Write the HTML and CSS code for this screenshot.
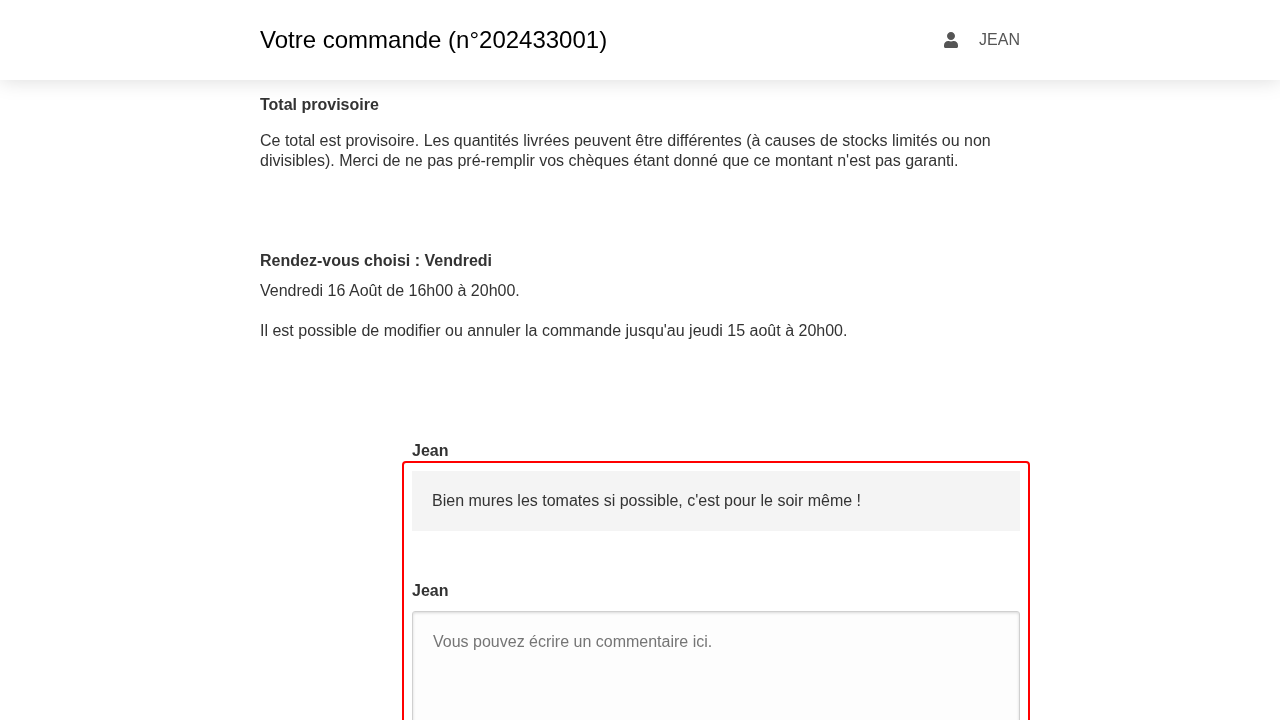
FILE: index.html
```html
<!DOCTYPE html>
<html lang="fr">
<head>
<meta charset="utf-8">
<title>Votre commande</title>
<link rel="stylesheet" href="styles.css">
</head>
<body>
<div class="page">
<header class="topbar">
  <div class="topbar-inner">
    <h1 class="title">Votre commande (n°202433001)</h1>
    <div class="user">
      <svg class="user-icon" viewBox="0 0 448 512" aria-hidden="true"><path d="M224 256c70.7 0 128-57.3 128-128S294.7 0 224 0 96 57.3 96 128s57.3 128 128 128zm89.6 32h-16.7c-22.2 10.2-46.9 16-72.9 16s-50.6-5.8-72.9-16h-16.7C60.2 288 0 348.2 0 422.4V464c0 26.5 21.5 48 48 48h352c26.5 0 48-21.5 48-48v-41.6c0-74.2-60.2-134.4-134.4-134.4z"/></svg>
      <span>JEAN</span>
    </div>
  </div>
</header>
<main class="content">
  <section class="total">
    <h2 class="heading">Total provisoire</h2>
    <p class="note">Ce total est provisoire. Les quantités livrées peuvent être différentes (à causes de stocks limités ou non divisibles). Merci de ne pas pré-remplir vos chèques étant donné que ce montant n'est pas garanti.</p>
  </section>
  <section class="meeting">
    <h2 class="heading">Rendez-vous choisi : Vendredi</h2>
    <p class="slot">Vendredi 16 Août de 16h00 à 20h00.</p>
    <p class="deadline">Il est possible de modifier ou annuler la commande jusqu'au jeudi 15 août à 20h00.</p>
  </section>
  <section class="comments">
    <div class="author">Jean</div>
    <div class="comment-box">
      <div class="bubble">Bien mures les tomates si possible, c'est pour le soir même !</div>
      <div class="author author-form">Jean</div>
      <textarea class="field" placeholder="Vous pouvez écrire un commentaire ici."></textarea>
    </div>
  </section>
</main>
</div>
</body>
</html>
```
FILE: styles.css
```css
* {
  box-sizing: border-box;
}

html,
body {
  height: 100%;
  overflow: hidden;
}

body {
  margin: 0;
  background: #fff;
  color: #333;
  font-family: "Liberation Sans", Arial, sans-serif;
  font-size: 16px;
  line-height: 20px;
}

.page {
  will-change: transform;
}

.topbar {
  position: relative;
  z-index: 1;
  height: 80px;
  background: #fff;
  box-shadow: 0 0 20px rgba(0, 0, 0, 0.15);
}

.topbar-inner {
  display: flex;
  align-items: center;
  justify-content: space-between;
  width: 760px;
  height: 100%;
  margin: 0 auto;
}

.title {
  margin: 0;
  color: #000;
  font-size: 24px;
  font-weight: 400;
  line-height: 30px;
}

.user {
  display: flex;
  align-items: center;
  gap: 21px;
  color: #555;
}

.user-icon {
  display: block;
  width: 14px;
  height: 16px;
  fill: #555;
}

.content {
  width: 760px;
  margin: 0 auto;
  padding-top: 15px;
}

.heading {
  margin: 0;
  font-size: 16px;
  font-weight: 700;
  line-height: 20px;
}

.note {
  margin: 16px 0 0;
}

.meeting {
  margin-top: 80px;
}

.slot {
  margin: 10px 0 0;
}

.deadline {
  margin: 20px 0 0;
}

.comments {
  width: 628px;
  margin: 100px -10px 0 auto;
}

.author {
  padding-left: 10px;
  font-weight: 700;
}

.comment-box {
  padding: 8px;
  border: 2px solid #f00;
  border-radius: 4px;
}

.bubble {
  padding: 20px;
  background: #f4f4f4;
}

.author-form {
  margin-top: 50px;
  padding-left: 0;
}

.field {
  display: block;
  width: 100%;
  height: 200px;
  margin-top: 10px;
  padding: 20px;
  border: 1px solid #d0d0d0;
  border-radius: 3px;
  background: #fdfdfd;
  box-shadow: inset 0 1px 3px rgba(0, 0, 0, 0.15);
  color: #333;
  font-family: inherit;
  font-size: 16px;
  line-height: 20px;
  resize: none;
}

.field::placeholder {
  color: #757575;
  opacity: 1;
}
```
